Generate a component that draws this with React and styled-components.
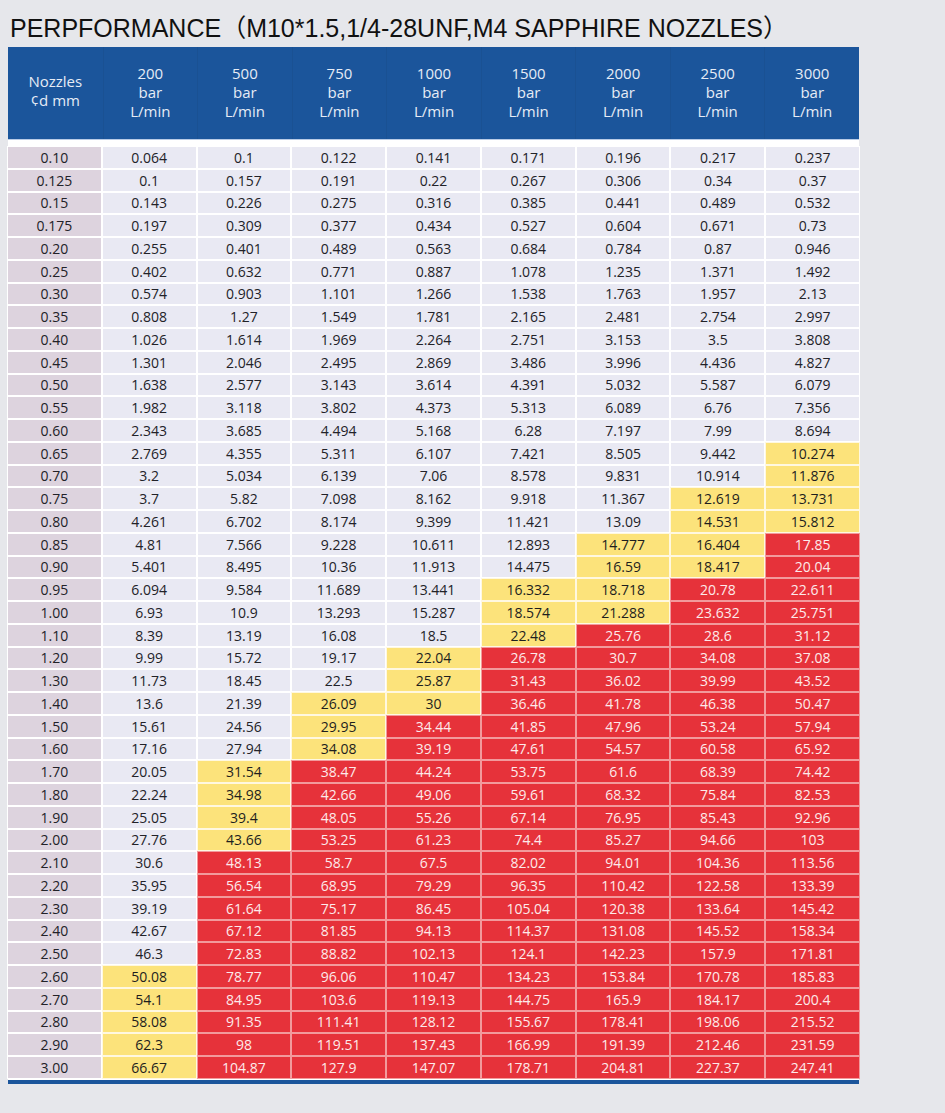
import React from 'react';
import styled, { createGlobalStyle } from 'styled-components';

const GlobalStyle = createGlobalStyle`
  html, body {
    margin: 0;
    padding: 0;
    background: #e6e7eb;
  }
`;

const pressures = [200, 500, 750, 1000, 1500, 2000, 2500, 3000];

// yellow from / red from (nozzle diameter), per pressure column
const limits = [
  { yellow: 2.6, red: 99 },
  { yellow: 1.7, red: 2.1 },
  { yellow: 1.4, red: 1.7 },
  { yellow: 1.2, red: 1.5 },
  { yellow: 0.95, red: 1.2 },
  { yellow: 0.85, red: 1.1 },
  { yellow: 0.75, red: 0.95 },
  { yellow: 0.65, red: 0.85 },
];

const rows = [
  ['0.10', '0.064', '0.1', '0.122', '0.141', '0.171', '0.196', '0.217', '0.237'],
  ['0.125', '0.1', '0.157', '0.191', '0.22', '0.267', '0.306', '0.34', '0.37'],
  ['0.15', '0.143', '0.226', '0.275', '0.316', '0.385', '0.441', '0.489', '0.532'],
  ['0.175', '0.197', '0.309', '0.377', '0.434', '0.527', '0.604', '0.671', '0.73'],
  ['0.20', '0.255', '0.401', '0.489', '0.563', '0.684', '0.784', '0.87', '0.946'],
  ['0.25', '0.402', '0.632', '0.771', '0.887', '1.078', '1.235', '1.371', '1.492'],
  ['0.30', '0.574', '0.903', '1.101', '1.266', '1.538', '1.763', '1.957', '2.13'],
  ['0.35', '0.808', '1.27', '1.549', '1.781', '2.165', '2.481', '2.754', '2.997'],
  ['0.40', '1.026', '1.614', '1.969', '2.264', '2.751', '3.153', '3.5', '3.808'],
  ['0.45', '1.301', '2.046', '2.495', '2.869', '3.486', '3.996', '4.436', '4.827'],
  ['0.50', '1.638', '2.577', '3.143', '3.614', '4.391', '5.032', '5.587', '6.079'],
  ['0.55', '1.982', '3.118', '3.802', '4.373', '5.313', '6.089', '6.76', '7.356'],
  ['0.60', '2.343', '3.685', '4.494', '5.168', '6.28', '7.197', '7.99', '8.694'],
  ['0.65', '2.769', '4.355', '5.311', '6.107', '7.421', '8.505', '9.442', '10.274'],
  ['0.70', '3.2', '5.034', '6.139', '7.06', '8.578', '9.831', '10.914', '11.876'],
  ['0.75', '3.7', '5.82', '7.098', '8.162', '9.918', '11.367', '12.619', '13.731'],
  ['0.80', '4.261', '6.702', '8.174', '9.399', '11.421', '13.09', '14.531', '15.812'],
  ['0.85', '4.81', '7.566', '9.228', '10.611', '12.893', '14.777', '16.404', '17.85'],
  ['0.90', '5.401', '8.495', '10.36', '11.913', '14.475', '16.59', '18.417', '20.04'],
  ['0.95', '6.094', '9.584', '11.689', '13.441', '16.332', '18.718', '20.78', '22.611'],
  ['1.00', '6.93', '10.9', '13.293', '15.287', '18.574', '21.288', '23.632', '25.751'],
  ['1.10', '8.39', '13.19', '16.08', '18.5', '22.48', '25.76', '28.6', '31.12'],
  ['1.20', '9.99', '15.72', '19.17', '22.04', '26.78', '30.7', '34.08', '37.08'],
  ['1.30', '11.73', '18.45', '22.5', '25.87', '31.43', '36.02', '39.99', '43.52'],
  ['1.40', '13.6', '21.39', '26.09', '30', '36.46', '41.78', '46.38', '50.47'],
  ['1.50', '15.61', '24.56', '29.95', '34.44', '41.85', '47.96', '53.24', '57.94'],
  ['1.60', '17.16', '27.94', '34.08', '39.19', '47.61', '54.57', '60.58', '65.92'],
  ['1.70', '20.05', '31.54', '38.47', '44.24', '53.75', '61.6', '68.39', '74.42'],
  ['1.80', '22.24', '34.98', '42.66', '49.06', '59.61', '68.32', '75.84', '82.53'],
  ['1.90', '25.05', '39.4', '48.05', '55.26', '67.14', '76.95', '85.43', '92.96'],
  ['2.00', '27.76', '43.66', '53.25', '61.23', '74.4', '85.27', '94.66', '103'],
  ['2.10', '30.6', '48.13', '58.7', '67.5', '82.02', '94.01', '104.36', '113.56'],
  ['2.20', '35.95', '56.54', '68.95', '79.29', '96.35', '110.42', '122.58', '133.39'],
  ['2.30', '39.19', '61.64', '75.17', '86.45', '105.04', '120.38', '133.64', '145.42'],
  ['2.40', '42.67', '67.12', '81.85', '94.13', '114.37', '131.08', '145.52', '158.34'],
  ['2.50', '46.3', '72.83', '88.82', '102.13', '124.1', '142.23', '157.9', '171.81'],
  ['2.60', '50.08', '78.77', '96.06', '110.47', '134.23', '153.84', '170.78', '185.83'],
  ['2.70', '54.1', '84.95', '103.6', '119.13', '144.75', '165.9', '184.17', '200.4'],
  ['2.80', '58.08', '91.35', '111.41', '128.12', '155.67', '178.41', '198.06', '215.52'],
  ['2.90', '62.3', '98', '119.51', '137.43', '166.99', '191.39', '212.46', '231.59'],
  ['3.00', '66.67', '104.87', '127.9', '147.07', '178.71', '204.81', '227.37', '247.41'],
];

const tones = {
  base: { bg: '#e9e9f3', fg: '#222228', line: '#ffffff' },
  nozzle: { bg: '#ddd3de', fg: '#222228', line: '#ffffff' },
  yellow: { bg: '#fce37b', fg: '#1e1e1e', line: '#fff8e0' },
  red: { bg: '#e6323a', fg: '#fdeaea', line: '#f29a9c' },
};

const toneFor = (nozzle, col) => {
  const d = parseFloat(nozzle);
  const lim = limits[col];
  if (d >= lim.red - 0.001) return 'red';
  if (d >= lim.yellow - 0.001) return 'yellow';
  return 'base';
};

const Page = styled.div`
  padding: 0 8px 30px;
  font-family: 'Open Sans', 'Noto Sans', sans-serif;
`;

const Title = styled.h1`
  margin: 0;
  padding: 14px 0 5px 2px;
  font-family: 'Liberation Sans', Arial, 'Noto Sans CJK SC', sans-serif;
  font-weight: 400;
  font-size: 25px;
  line-height: 28px;
  color: #111;
  white-space: nowrap;
`;

const Table = styled.div`
  width: 851px;
  background: #ffffff;
  border-bottom: 4px solid #1b559b;
`;

const Head = styled.div`
  display: grid;
  grid-template-columns: repeat(9, 1fr);
  height: 92px;
  background: #1b559b;
  border-bottom: 1px solid #b9cbe6;
`;

const HeadCell = styled.div`
  display: flex;
  flex-direction: column;
  align-items: center;
  justify-content: center;
  padding-bottom: ${p => (p.$first ? '5px' : '1px')};
  border-left: ${p => (p.$first ? 'none' : '1px solid #1a5193')};
  color: #e6ecf6;
  font-size: 15px;
  line-height: 19px;
  text-align: center;
`;

const Body = styled.div`
  display: grid;
  grid-template-columns: repeat(9, 1fr);
  grid-auto-rows: 20.75px;
  gap: 2px;
  padding: 7px 0 2px;
`;

const Cell = styled.div`
  display: flex;
  align-items: center;
  justify-content: center;
  background: ${p => tones[p.$tone].bg};
  color: ${p => tones[p.$tone].fg};
  box-shadow: 0 0 0 1px ${p => tones[p.$tone].line};
  font-size: 14px;
  line-height: 1;
  padding-top: 1px;
`;

export default function App() {
  return (
    <Page>
      <GlobalStyle />
      <Title>PERPFORMANCE（M10*1.5,1/4-28UNF,M4 SAPPHIRE NOZZLES）</Title>
      <Table>
        <Head>
          <HeadCell $first>
            <span>Nozzles</span>
            <span>¢d mm</span>
          </HeadCell>
          {pressures.map(p => (
            <HeadCell key={p}>
              <span>{p}</span>
              <span>bar</span>
              <span>L/min</span>
            </HeadCell>
          ))}
        </Head>
        <Body>
          {rows.map(row =>
            row.map((value, i) => (
              <Cell
                key={`${row[0]}-${i}`}
                $tone={i === 0 ? 'nozzle' : toneFor(row[0], i - 1)}
              >
                {value}
              </Cell>
            ))
          )}
        </Body>
      </Table>
    </Page>
  );
}
